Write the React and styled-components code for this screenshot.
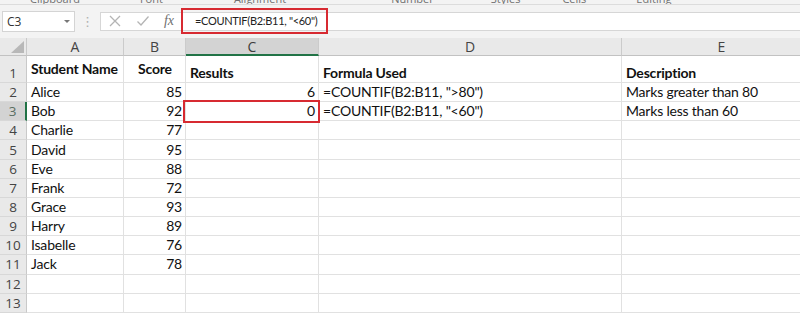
import React from "react";
import styled, { createGlobalStyle } from "styled-components";

const GlobalStyle = createGlobalStyle`
  html, body {
    margin: 0;
    padding: 0;
    background: #ffffff;
    overflow: hidden;
  }
  * {
    box-sizing: border-box;
  }
`;

const GREEN = "#217346";

const students = [
  ["Alice", 85],
  ["Bob", 92],
  ["Charlie", 77],
  ["David", 95],
  ["Eve", 88],
  ["Frank", 72],
  ["Grace", 93],
  ["Harry", 89],
  ["Isabelle", 76],
  ["Jack", 78],
];

const extra = {
  2: { result: 6, formula: '=COUNTIF(B2:B11, ">80")', desc: "Marks greater than 80" },
  3: { result: 0, formula: '=COUNTIF(B2:B11, "<60")', desc: "Marks less than 60" },
};

const ribbonGroups = [
  { label: "Clipboard", left: 30 },
  { label: "Font", left: 60 },
  { label: "Alignment", left: 71 },
  { label: "Number", left: 105 },
  { label: "Styles", left: 57 },
  { label: "Cells", left: 42 },
  { label: "Editing", left: 50 },
];

const Screen = styled.div`
  width: 800px;
  height: 315px;
  overflow: hidden;
  background: #ffffff;
  font-family: "Lato", "Liberation Sans", sans-serif;
`;

const Top = styled.div`
  background: #f3f3f3;
  height: 38px;
  display: flex;
  flex-direction: column;
`;

const Ribbon = styled.div`
  height: 5px;
  overflow: hidden;
  display: flex;
  align-items: flex-end;
  border-bottom: 1px solid #dcdcdc;
`;

const RibbonLabel = styled.span`
  font-family: "Open Sans", sans-serif;
  font-size: 11px;
  line-height: 11px;
  color: #707070;
  margin-left: ${(p) => p.$left}px;
  white-space: nowrap;
`;

const FormulaRow = styled.div`
  display: flex;
  align-items: center;
  height: 32px;
  padding: 0 0 0 2px;
`;

const NameBox = styled.div`
  width: 73px;
  height: 21px;
  background: #ffffff;
  border: 1px solid #d4d4d4;
  display: flex;
  align-items: center;
  justify-content: space-between;
  padding: 0 4px 0 4px;
  font-family: "Open Sans", sans-serif;
  font-size: 12px;
  color: #333;
`;

const Caret = styled.span`
  width: 0;
  height: 0;
  border-left: 3px solid transparent;
  border-right: 3px solid transparent;
  border-top: 3px solid #777;
`;

const Dots = styled.span`
  width: 25px;
  text-align: center;
  color: #b0b0b0;
  font-size: 13px;
  line-height: 1;
  font-family: "DejaVu Sans", sans-serif;
`;

const FormulaBox = styled.div`
  flex: 1;
  height: 19px;
  background: #ffffff;
  border: 1px solid #d6d6d6;
  border-right: none;
  display: flex;
  align-items: center;
`;

const IconSlot = styled.span`
  width: ${(p) => p.$w}px;
  display: flex;
  justify-content: center;
  align-items: center;
`;

const Fx = styled.span`
  font-family: "Liberation Serif", serif;
  font-style: italic;
  font-size: 14px;
  color: #707070;
`;

const Highlight = styled.div`
  align-self: stretch;
  margin: -5px 0 -4px 0;
  width: 147px;
  border: 2px solid #d72a31;
  display: flex;
  align-items: center;
  padding-left: 12px;
  font-family: "Lato", sans-serif;
  font-size: 11px;
  letter-spacing: -0.3px;
  color: #222;
  white-space: nowrap;
`;

const Sheet = styled.div`
  display: grid;
  grid-template-columns: 27px 97px 62px 133px 303px 200px;
  grid-template-rows: 18px 27px repeat(12, 19.17px);
`;

const Corner = styled.div`
  background: #e9e9e9;
  border-right: 1px solid #c9c9c9;
  border-bottom: 1px solid #c2c2c2;
  display: flex;
  align-items: flex-end;
  justify-content: flex-end;
  padding: 0 2px 2px 0;
`;

const ColHead = styled.div`
  background: ${(p) => (p.$active ? "#d3d3d3" : "#e9e9e9")};
  border-right: 1px solid #cbcbcb;
  border-bottom: ${(p) => (p.$active ? `2px solid ${GREEN}` : "1px solid #c2c2c2")};
  display: flex;
  align-items: center;
  justify-content: center;
  font-family: "Open Sans", sans-serif;
  font-size: 14px;
  color: ${(p) => (p.$active ? "#3d3d3d" : "#444")};
  padding-top: ${(p) => (p.$active ? "1px" : "0")};
`;

const RowHead = styled.div`
  background: ${(p) => (p.$active ? "#d3d3d3" : "#e9e9e9")};
  border-right: ${(p) => (p.$active ? `2px solid ${GREEN}` : "1px solid #c9c9c9")};
  border-bottom: 1px solid #d8d8d8;
  display: flex;
  align-items: ${(p) => (p.$bottom ? "flex-end" : "center")};
  justify-content: center;
  font-family: "Open Sans", sans-serif;
  font-size: 13.5px;
  line-height: 18px;
  color: ${(p) => (p.$active ? "#5a6e62" : "#444")};
`;

const Cell = styled.div`
  border-right: 1px solid #e1e1e1;
  border-bottom: 1px solid #e1e1e1;
  display: flex;
  align-items: ${(p) => (p.$valign === "bottom" ? "flex-end" : "center")};
  justify-content: ${(p) =>
    p.$align === "right" ? "flex-end" : p.$align === "center" ? "center" : "flex-start"};
  padding: 0 3px 0 4px;
  font-size: 14px;
  letter-spacing: -0.2px;
  line-height: 18px;
  font-weight: ${(p) => (p.$bold ? 700 : 400)};
  color: #111;
  white-space: nowrap;
  outline: ${(p) => (p.$marked ? "2px solid #d72a31" : "none")};
  outline-offset: -1px;
  position: ${(p) => (p.$marked ? "relative" : "static")};
  margin: ${(p) => (p.$marked ? "-1px 0 -1px -2px" : "0")};
  z-index: ${(p) => (p.$marked ? 1 : 0)};
`;

const XIcon = () => (
  <svg width="14" height="14" viewBox="0 0 14 14">
    <path d="M2 2 L12 12 M12 2 L2 12" stroke="#b4b4b4" strokeWidth="1.3" fill="none" />
  </svg>
);

const CheckIcon = () => (
  <svg width="14" height="14" viewBox="0 0 14 14">
    <path d="M1.5 7.5 L5 11 L12.5 2.5" stroke="#b4b4b4" strokeWidth="1.3" fill="none" />
  </svg>
);

const CornerTriangle = () => (
  <svg width="13" height="12" viewBox="0 0 13 12">
    <polygon points="13,0 13,12 0,12" fill="#b8b8b8" />
  </svg>
);

const App = () => {
  const rows = [];
  for (let r = 1; r <= 13; r++) {
    const active = r === 3;
    rows.push(
      <RowHead key={`h${r}`} $active={active} $bottom={r === 1}>
        {r}
      </RowHead>
    );
    if (r === 1) {
      rows.push(
        <Cell key="a1" $bold>Student Name</Cell>,
        <Cell key="b1" $bold $align="center">Score</Cell>,
        <Cell key="c1" $bold $valign="bottom">Results</Cell>,
        <Cell key="d1" $bold $valign="bottom">Formula Used</Cell>,
        <Cell key="e1" $bold $valign="bottom">Description</Cell>
      );
      continue;
    }
    const s = students[r - 2];
    const x = extra[r];
    rows.push(
      <Cell key={`a${r}`}>{s ? s[0] : ""}</Cell>,
      <Cell key={`b${r}`} $align="right">{s ? s[1] : ""}</Cell>,
      <Cell key={`c${r}`} $align="right" $marked={active}>{x ? x.result : ""}</Cell>,
      <Cell key={`d${r}`}>{x ? x.formula : ""}</Cell>,
      <Cell key={`e${r}`}>{x ? x.desc : ""}</Cell>
    );
  }

  return (
    <Screen>
      <GlobalStyle />
      <Top>
        <Ribbon>
          {ribbonGroups.map((g) => (
            <RibbonLabel key={g.label} $left={g.left}>
              {g.label}
            </RibbonLabel>
          ))}
        </Ribbon>
        <FormulaRow>
          <NameBox>
            C3
            <Caret />
          </NameBox>
          <Dots>⋮</Dots>
          <FormulaBox>
            <IconSlot $w={28}>
              <XIcon />
            </IconSlot>
            <IconSlot $w={28}>
              <CheckIcon />
            </IconSlot>
            <IconSlot $w={24}>
              <Fx>fx</Fx>
            </IconSlot>
            <Highlight>=COUNTIF(B2:B11, "&lt;60")</Highlight>
          </FormulaBox>
        </FormulaRow>
      </Top>
      <Sheet>
        <Corner>
          <CornerTriangle />
        </Corner>
        <ColHead>A</ColHead>
        <ColHead>B</ColHead>
        <ColHead $active>C</ColHead>
        <ColHead>D</ColHead>
        <ColHead>E</ColHead>
        {rows}
      </Sheet>
    </Screen>
  );
};

export default App;
